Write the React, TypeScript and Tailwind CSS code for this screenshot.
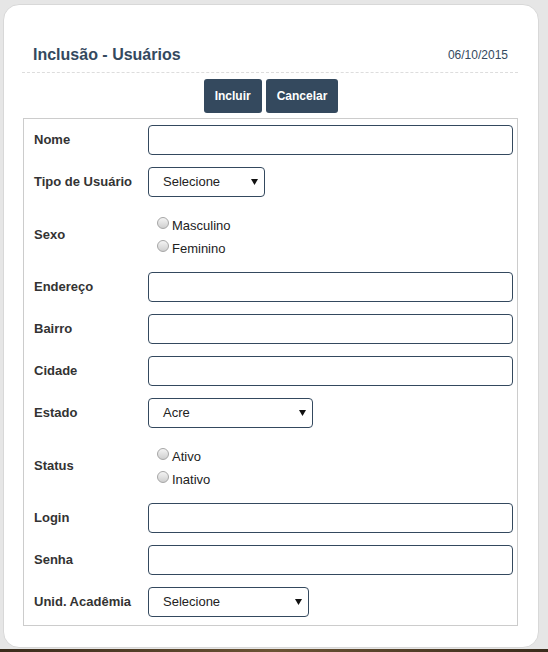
import React from "react";

const font = { fontFamily: '"Liberation Sans", Arial, sans-serif' };

type Field =
    | { kind: "text"; label: string }
    | { kind: "select"; label: string; value: string; width: string }
    | { kind: "radio"; label: string; options: string[] };

const fields: Field[] = [
    { kind: "text", label: "Nome" },
    { kind: "select", label: "Tipo de Usuário", value: "Selecione", width: "w-[117px]" },
    { kind: "radio", label: "Sexo", options: ["Masculino", "Feminino"] },
    { kind: "text", label: "Endereço" },
    { kind: "text", label: "Bairro" },
    { kind: "text", label: "Cidade" },
    { kind: "select", label: "Estado", value: "Acre", width: "w-[165px]" },
    { kind: "radio", label: "Status", options: ["Ativo", "Inativo"] },
    { kind: "text", label: "Login" },
    { kind: "text", label: "Senha" },
    { kind: "select", label: "Unid. Acadêmia", value: "Selecione", width: "w-[161px]" },
];

const Radio = ({ label }: { label: string }) => (
    <label className="flex items-center h-[23px] pl-[9px] text-[13px] text-[#222] cursor-pointer">
        <span className="mb-[5px] w-[12px] h-[12px] rounded-full border border-[#a6a6a6] bg-gradient-to-b from-[#f4f4f4] to-[#cfcfcf]" />
        <span className="ml-[3px]">{label}</span>
    </label>
);

const Select = ({ value, width }: { value: string; width: string }) => (
    <div
        className={`${width} h-[30px] flex items-center justify-between pl-[14px] pr-[6px] border border-[#34495e] rounded-[4px] bg-white text-[13px] text-[#222]`}
    >
        <span>{value}</span>
        <svg width="7" height="6" viewBox="0 0 7 6">
            <path d="M0 0 H7 L3.5 6 Z" fill="#111" />
        </svg>
    </div>
);

const App = () => {
    return (
        <div className="w-[548px] h-[652px] bg-[#e6e6e6] flex flex-col" style={font}>
            <div className="h-[649px] pt-[4px] pl-[3px]">
                {/* Card */}
                <div className="w-[536px] h-[644px] bg-white border border-[#d8d8d8] rounded-[16px] pl-[18px] pr-[20px]">
                    {/* Header */}
                    <div className="flex items-center justify-between pt-[41px] pb-[8px] pl-[11px] pr-[10px] border-b border-dashed border-[#dddddd]">
                        <h1 className="text-[16px] leading-[18px] font-bold text-[#34495e]">Inclusão - Usuários</h1>
                        <span className="text-[12px] leading-[14px] text-[#34495e]">06/10/2015</span>
                    </div>

                    {/* Buttons */}
                    <div className="flex justify-center gap-[4px] mt-[6px] pl-[2px]">
                        <button className="h-[34px] px-[11px] rounded-[3px] bg-[#34495e] text-white text-[12px] font-bold">
                            Incluir
                        </button>
                        <button className="h-[34px] px-[11px] rounded-[3px] bg-[#34495e] text-white text-[12px] font-bold">
                            Cancelar
                        </button>
                    </div>

                    {/* Form */}
                    <div className="mt-[5px] ml-[1px] border border-[#cccccc] pb-[2px]">
                        {fields.map((f) => (
                            <div
                                key={f.label}
                                className={`flex ${f.kind === "radio" ? "h-[63px]" : "h-[42px]"}`}
                            >
                                <div className="w-[124px] shrink-0 flex items-center pl-[10px] text-[13px] font-bold text-[#333]">
                                    {f.label}
                                </div>
                                <div className="flex-1 pr-[4px]">
                                    {f.kind === "text" && (
                                        <input
                                            type="text"
                                            className="mt-[6px] w-full h-[30px] border border-[#34495e] rounded-[4px] px-2 text-[13px] outline-none"
                                        />
                                    )}
                                    {f.kind === "select" && (
                                        <div className="mt-[6px]">
                                            <Select value={f.value} width={f.width} />
                                        </div>
                                    )}
                                    {f.kind === "radio" && (
                                        <div className="pt-[11px] flex flex-col">
                                            {f.options.map((o) => (
                                                <Radio key={o} label={o} />
                                            ))}
                                        </div>
                                    )}
                                </div>
                            </div>
                        ))}
                    </div>
                </div>
            </div>
            <div className="h-[3px] bg-gradient-to-r from-[#3a2c1c] via-[#6b5434] to-[#3a2c1c]" />
        </div>
    );
};

export default App;
